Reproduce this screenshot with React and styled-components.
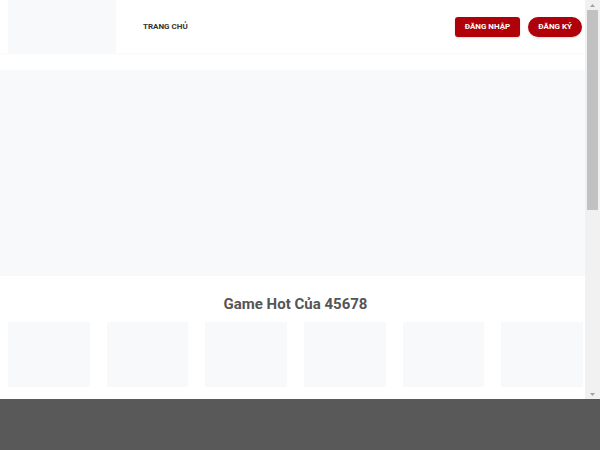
import React from "react";
import styled, { createGlobalStyle } from "styled-components";

const Global = createGlobalStyle`
  html, body { margin: 0; padding: 0; background: #595959; }
  body { font-family: Roboto, "Liberation Sans", Arial, sans-serif; }
`;

const Frame = styled.div`
  display: flex;
  height: 399px;
  background: #ffffff;
`;

const Viewport = styled.div`
  flex: 1;
  min-width: 0;
  overflow: hidden;
`;

const Scrollbar = styled.div`
  width: 15px;
  display: flex;
  flex-direction: column;
  background: #f1f1f1;
`;

const Arrow = styled.div`
  height: 10px;
  display: flex;
  align-items: center;
  justify-content: center;
`;

const Track = styled.div`
  flex: 1;
  padding: 0 2px;
`;

const Thumb = styled.div`
  height: 200px;
  background: #c1c1c1;
`;

const Page = styled.div`
  display: flex;
  flex-direction: column;
`;

const Header = styled.header`
  display: flex;
  align-items: stretch;
  height: 53px;
  padding: 0 3px 0 8px;
  box-shadow: 0 1px 2px rgba(0, 0, 0, 0.03);
`;

const Logo = styled.div`
  width: 108px;
  background: #f8f9fb;
`;

const Nav = styled.nav`
  display: flex;
  align-items: center;
  padding-left: 27px;
  flex: 1;
`;

const NavLink = styled.a`
  font-size: 8px;
  font-weight: 700;
  color: #333;
  text-transform: uppercase;
`;

const Actions = styled.div`
  display: flex;
  align-items: center;
  gap: 8px;
`;

const Button = styled.button`
  height: 20px;
  padding: 0 10px;
  border: none;
  border-radius: ${(p) => (p.$pill ? "10px" : "3px")};
  background: #b00009;
  color: #fff;
  font-family: Roboto, "Liberation Sans", Arial, sans-serif;
  font-size: 8px;
  font-weight: 700;
  box-shadow: 0 1px 2px rgba(0, 0, 0, 0.15);
`;

const Banner = styled.section`
  height: 206px;
  margin-top: 17px;
  background: #f8f9fb;
`;

const Section = styled.section`
  padding: 17px 2px 0 8px;
`;

const Title = styled.h2`
  margin: 0 0 7px;
  text-align: center;
  font-size: 15px;
  font-weight: 700;
  color: #555;
  line-height: 22px;
`;

const Grid = styled.div`
  display: grid;
  grid-template-columns: repeat(6, 1fr);
  column-gap: 17px;
`;

const Card = styled.div`
  height: 65px;
  background: #f8f9fb;
`;

const Tri = ({ down }) => (
  <svg width="5" height="3" viewBox="0 0 5 3">
    <path d={down ? "M0 0 L5 0 L2.5 3 Z" : "M0 3 L5 3 L2.5 0 Z"} fill="#a3a3a3" />
  </svg>
);

export default function App() {
  return (
    <>
      <Global />
      <Frame>
        <Viewport>
          <Page>
            <Header>
              <Logo />
              <Nav>
                <NavLink>Trang chủ</NavLink>
              </Nav>
              <Actions>
                <Button>ĐĂNG NHẬP</Button>
                <Button $pill>ĐĂNG KÝ</Button>
              </Actions>
            </Header>
            <Banner />
            <Section>
              <Title>Game Hot Của 45678</Title>
              <Grid>
                {Array.from({ length: 6 }).map((_, i) => (
                  <Card key={i} />
                ))}
              </Grid>
            </Section>
          </Page>
        </Viewport>
        <Scrollbar>
          <Arrow><Tri /></Arrow>
          <Track><Thumb /></Track>
          <Arrow><Tri down /></Arrow>
        </Scrollbar>
      </Frame>
    </>
  );
}
